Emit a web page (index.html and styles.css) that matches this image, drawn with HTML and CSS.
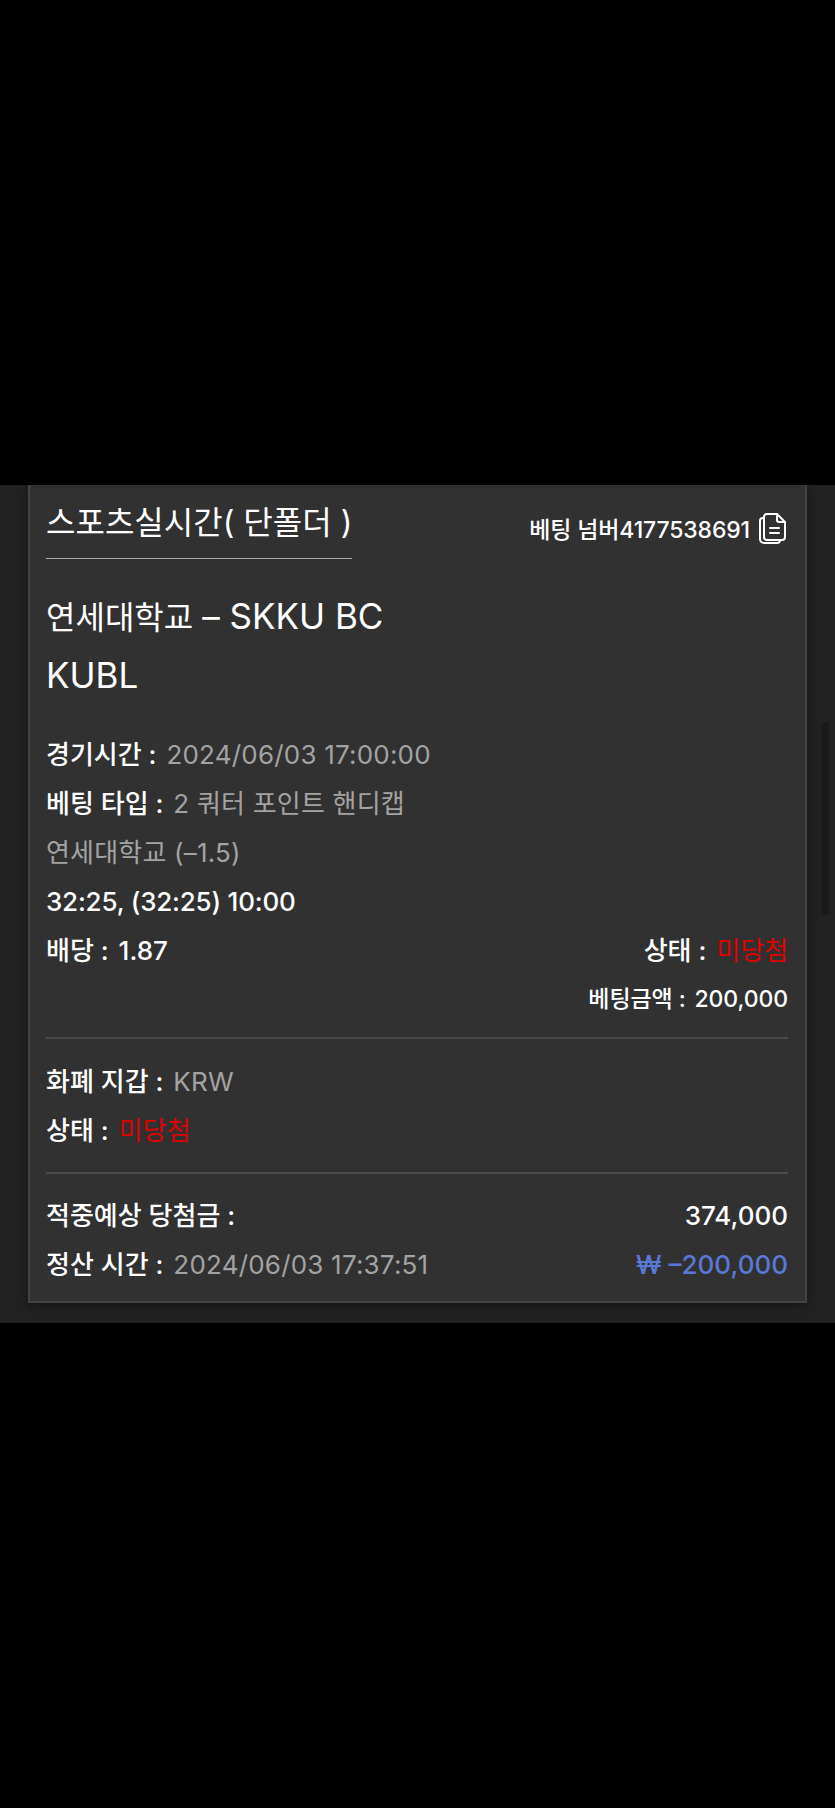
FILE: index.html
```html
<!DOCTYPE html>
<html lang="ko">
<head>
    <meta charset="UTF-8">
    <meta name="viewport" content="width=device-width, initial-scale=1.0">
    <title>베팅 내역</title>
    <link rel="stylesheet" href="styles.css">
</head>
<body>
    <div class="panel">
        <div class="scroll-thumb"></div>
        <div class="card">
            <div class="card-top">
                <div class="title">스포츠실시간( 단폴더 )</div>
                <div class="bet-no">
                    <span>베팅 넘버4177538691</span>
                    <svg class="copy-icon" viewBox="0 0 28 32" fill="none" stroke="#fff" stroke-width="2" stroke-linejoin="round" stroke-linecap="round">
                        <path d="M9 2h10l8 8v15a3 3 0 0 1-3 3H9a3 3 0 0 1-3-3V5a3 3 0 0 1 3-3z"/>
                        <path d="M19 2v6a2 2 0 0 0 2 2h6"/>
                        <path d="M6 6H5a3 3 0 0 0-3 3v18a4 4 0 0 0 4 4h13a3 3 0 0 0 3-3"/>
                        <path d="M12 16h9M12 21h9"/>
                    </svg>
                </div>
            </div>

            <div class="match">연세대학교 <span class="en">– SKKU BC</span></div>
            <div class="match"><span class="en">KUBL</span></div>

            <div class="details">
                <div class="row"><span><b>경기시간 : </b><span class="val muted">2024/06/03 17:00:00</span></span></div>
                <div class="row"><span><b>베팅 타입 : </b><span class="val muted">2 쿼터 포인트 핸디캡</span></span></div>
                <div class="row"><span class="muted">연세대학교 (–1.5)</span></div>
                <div class="row"><b class="score">32:25, (32:25) 10:00</b></div>
                <div class="row split"><span><b>배당 : </b><b class="val">1.87</b></span><span><b>상태 : </b><span class="val red">미당첨</span></span></div>
                <div class="row small-row"><b class="small">베팅금액 : <span class="val">200,000</span></b></div>
            </div>

            <div class="section">
                <div class="row"><span><b>화폐 지갑 : </b><span class="val muted">KRW</span></span></div>
                <div class="row"><span><b>상태 : </b><span class="val red">미당첨</span></span></div>
            </div>

            <div class="section last">
                <div class="row split"><b>적중예상 당첨금 :</b><b>374,000</b></div>
                <div class="row split"><span><b>정산 시간 : </b><span class="val muted">2024/06/03 17:37:51</span></span><span class="blue">₩ –200,000</span></div>
            </div>
        </div>
    </div>
</body>
</html>
```

FILE: styles.css
```css
html, body {
    margin: 0;
    height: 100%;
    background: #000;
}
body {
    padding-top: 485px;
    box-sizing: border-box;
    font-family: Inter, "Noto Sans CJK KR", sans-serif;
    color: #fff;
}
.panel {
    position: relative;
    height: 838px;
    padding: 0 28px;
    box-sizing: border-box;
    background: #212121;
}
.scroll-thumb {
    position: absolute;
    top: 237px;
    left: 822px;
    width: 7px;
    height: 193px;
    border-radius: 4px;
    background: #191919;
}
.card {
    height: 818px;
    padding: 0 17px 0 16px;
    box-sizing: border-box;
    background: #313131;
    border: 2px solid #444;
    border-top: 0;
    box-shadow: 0 2px 8px rgba(0,0,0,0.35);
}
.card-top {
    display: flex;
    justify-content: space-between;
    align-items: flex-start;
}
.title {
    height: 73px;
    line-height: 75px;
    font-size: 32px;
    border-bottom: 1px solid #aaa;
}
.bet-no {
    display: flex;
    align-items: center;
    gap: 8px;
    margin-top: 26px;
    font-size: 23px;
    font-weight: 450;
    letter-spacing: -0.15px;
}
.copy-icon {
    width: 28px;
    height: 32px;
    margin-right: 2px;
}
.match {
    height: 59px;
    line-height: 59px;
    font-size: 32px;
}
.match .en {
    font-size: 35px;
}
.match:nth-child(2) {
    margin-top: 28px;
}
.details {
    margin-top: 25px;
}
.row {
    height: 49px;
    line-height: 49px;
    font-size: 26px;
    white-space: nowrap;
}
.row b {
    font-weight: 450;
}
.val {
    margin-left: 3px;
}
.score {
    letter-spacing: -0.2px;
}
.split {
    display: flex;
    justify-content: space-between;
}
.small-row {
    text-align: right;
    line-height: 45px;
}
.row .small {
    font-size: 23px;
    letter-spacing: -0.1px;
}
.muted {
    color: #a3a3a3;
    letter-spacing: 0.2px;
}
.red {
    color: #e00000;
}
.blue {
    color: #5a78d6;
    font-weight: 450;
}
.section {
    margin-top: 13px;
    padding-top: 18px;
    border-top: 2px solid #4a4a4a;
}
.section.last {
    margin-top: 17px;
    padding-top: 17px;
}
```
